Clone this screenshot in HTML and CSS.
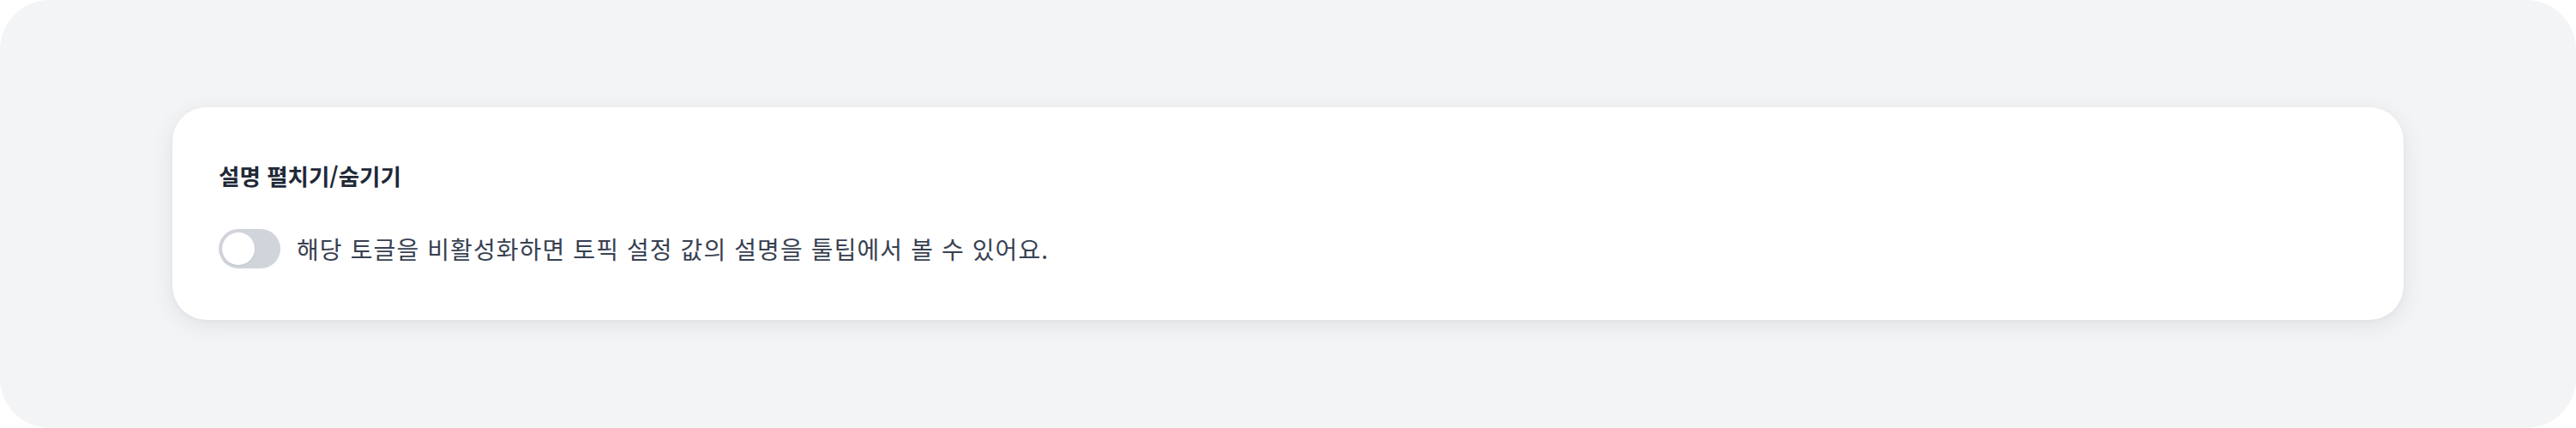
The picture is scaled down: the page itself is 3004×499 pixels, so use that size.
FILE: index.html
```html
<!DOCTYPE html>
<html lang="ko">
<head>
<meta charset="utf-8">
<title>설명 펼치기/숨기기</title>
<link rel="stylesheet" href="styles.css">
</head>
<body>
<div class="frame">
  <section class="card">
    <h2 class="title">설명 펼치기/숨기기</h2>
    <div class="row">
      <span class="toggle" role="switch" aria-checked="false"><span class="knob"></span></span>
      <p class="desc">해당 토글을 비활성화하면 토픽 설정 값의 설명을 툴팁에서 볼 수 있어요.</p>
    </div>
  </section>
</div>
</body>
</html>
```

FILE: styles.css
```css
html, body {
  margin: 0;
  padding: 0;
  background: #ffffff;
}
body {
  font-family: "Noto Sans CJK KR", "Noto Sans", sans-serif;
}
.frame {
  box-sizing: border-box;
  width: 3004px;
  height: 499px;
  background: #f3f4f6;
  border-radius: 58px;
  padding: 125px 201px 0 201px;
}
.card {
  box-sizing: border-box;
  height: 248px;
  background: #ffffff;
  border-radius: 40px;
  padding: 60px 54px 60px 54px;
  box-shadow: 0 6px 28px rgba(17, 24, 39, 0.08), 0 2px 6px rgba(17, 24, 39, 0.03);
}
.title {
  margin: 0;
  font-size: 26.5px;
  line-height: 40px;
  font-weight: 700;
  color: #1f2937;
}
.row {
  margin-top: 42px;
  display: flex;
  align-items: center;
  gap: 19px;
  height: 46px;
}
.toggle {
  box-sizing: border-box;
  width: 72px;
  height: 46px;
  border-radius: 23px;
  background: #d1d5db;
  padding: 4px;
  display: flex;
  align-items: center;
  flex: none;
}
.knob {
  width: 38px;
  height: 38px;
  border-radius: 50%;
  background: #ffffff;
  box-shadow: 0 1px 2px rgba(0, 0, 0, 0.08);
}
.desc {
  margin: 0;
  font-size: 28px;
  line-height: 40px;
  letter-spacing: 1.1px;
  color: #374151;
}
```
